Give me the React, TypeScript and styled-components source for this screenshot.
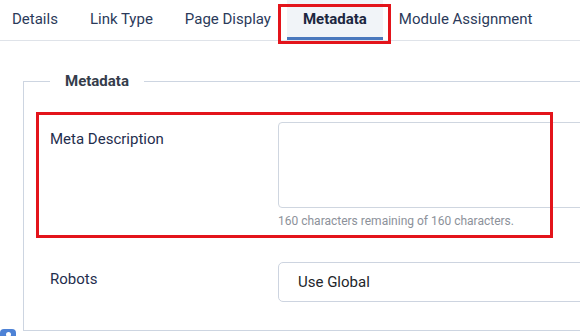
import React from "react";
import styled, { createGlobalStyle } from "styled-components";

const Global = createGlobalStyle`
  html, body {
    margin: 0;
    padding: 0;
    width: 580px;
    height: 336px;
    overflow: hidden;
    background: #ffffff;
    font-family: Roboto, "Liberation Sans", Arial, sans-serif;
  }
  * { box-sizing: border-box; }
`;

const Page = styled.div`
  position: relative;
  width: 580px;
  height: 336px;
  overflow: hidden;
`;

const TabList = styled.div`
  display: flex;
  align-items: stretch;
  height: 41px;
  border-bottom: 1px solid #dfe3e9;
  margin-left: -4px;
  width: 700px;
`;

const Tab = styled.div<{ $active?: boolean }>`
  position: relative;
  display: flex;
  align-items: center;
  height: 40px;
  padding: 0 16px 3px;
  font-size: 15px;
  white-space: nowrap;
  color: ${(p) => (p.$active ? "#1c2740" : "#2b3a5a")};
  font-weight: ${(p) => (p.$active ? 700 : 400)};
  background: ${(p) => (p.$active ? "#f1f4f8" : "transparent")};
  box-shadow: ${(p) => (p.$active ? "inset 0 -3px 0 #4a78bd" : "none")};
`;

const Highlight = styled.span<{ $l: number; $t: number; $w: number; $h: number }>`
  position: absolute;
  left: ${(p) => p.$l}px;
  top: ${(p) => p.$t}px;
  width: ${(p) => p.$w}px;
  height: ${(p) => p.$h}px;
  border: 3px solid #e3141b;
  pointer-events: none;
`;

const Fieldset = styled.fieldset`
  margin: 29px 0 0 23px;
  width: 640px;
  min-width: 0;
  border: 1px solid #cdd5e1;
  padding: 0 26px 28px;
`;

const Legend = styled.legend`
  padding: 0 15px;
  font-size: 15px;
  line-height: 22px;
  font-weight: 700;
  color: #353d4b;
`;

const Rows = styled.div`
  padding-top: 30px;
  display: flex;
  flex-direction: column;
  gap: 33px;
`;

const Row = styled.div`
  position: relative;
  display: grid;
  grid-template-columns: 228px 1fr;
`;

const Label = styled.div`
  padding-top: 6px;
  font-size: 15px;
  line-height: 22px;
  color: #1f2e4e;
`;

const Control = styled.div`
  display: flex;
  flex-direction: column;
`;

const TextArea = styled.textarea`
  display: block;
  width: 100%;
  height: 86px;
  border: 1px solid #cfd6e0;
  border-radius: 4px;
  resize: none;
  font-family: inherit;
  font-size: 15px;
  padding: 8px 19px;
  background: #fff;
`;

const Helper = styled.div`
  margin-top: 5px;
  font-size: 12px;
  line-height: 16px;
  color: #8c919a;
`;

const Select = styled.select`
  display: block;
  width: 100%;
  height: 40px;
  border: 1px solid #cdd4e0;
  border-radius: 5px;
  padding: 0 19px;
  font-family: inherit;
  font-size: 15px;
  color: #22262a;
  background: #fff;
  appearance: none;
  -webkit-appearance: none;
  outline: none;
`;

const Badge = styled.div`
  position: absolute;
  left: 0;
  top: 329px;
  width: 16px;
  height: 16px;
  border-radius: 4px;
  background: #4d82d6;
  display: flex;
  justify-content: center;
  padding-top: 3px;
`;

const BadgeDot = styled.span`
  width: 5px;
  height: 5px;
  border-radius: 50%;
  background: #ffffff;
`;

const tabs = ["Details", "Link Type", "Page Display", "Metadata", "Module Assignment"];

export default function App() {
  return (
    <Page>
      <Global />
      <TabList>
        {tabs.map((t) => (
          <Tab key={t} $active={t === "Metadata"}>
            {t}
            {t === "Metadata" && <Highlight $l={-9} $t={4} $w={113} $h={40} />}
          </Tab>
        ))}
      </TabList>
      <Fieldset>
        <Legend>Metadata</Legend>
        <Rows>
          <Row>
            <Label>Meta Description</Label>
            <Control>
              <TextArea aria-label="Meta Description" />
              <Helper>160 characters remaining of 160 characters.</Helper>
            </Control>
            <Highlight $l={-14} $t={-10} $w={517} $h={126} />
          </Row>
          <Row>
            <Label>Robots</Label>
            <Control>
              <Select defaultValue="global" aria-label="Robots">
                <option value="global">Use Global</option>
              </Select>
            </Control>
          </Row>
        </Rows>
      </Fieldset>
      <Badge>
        <BadgeDot />
      </Badge>
    </Page>
  );
}
